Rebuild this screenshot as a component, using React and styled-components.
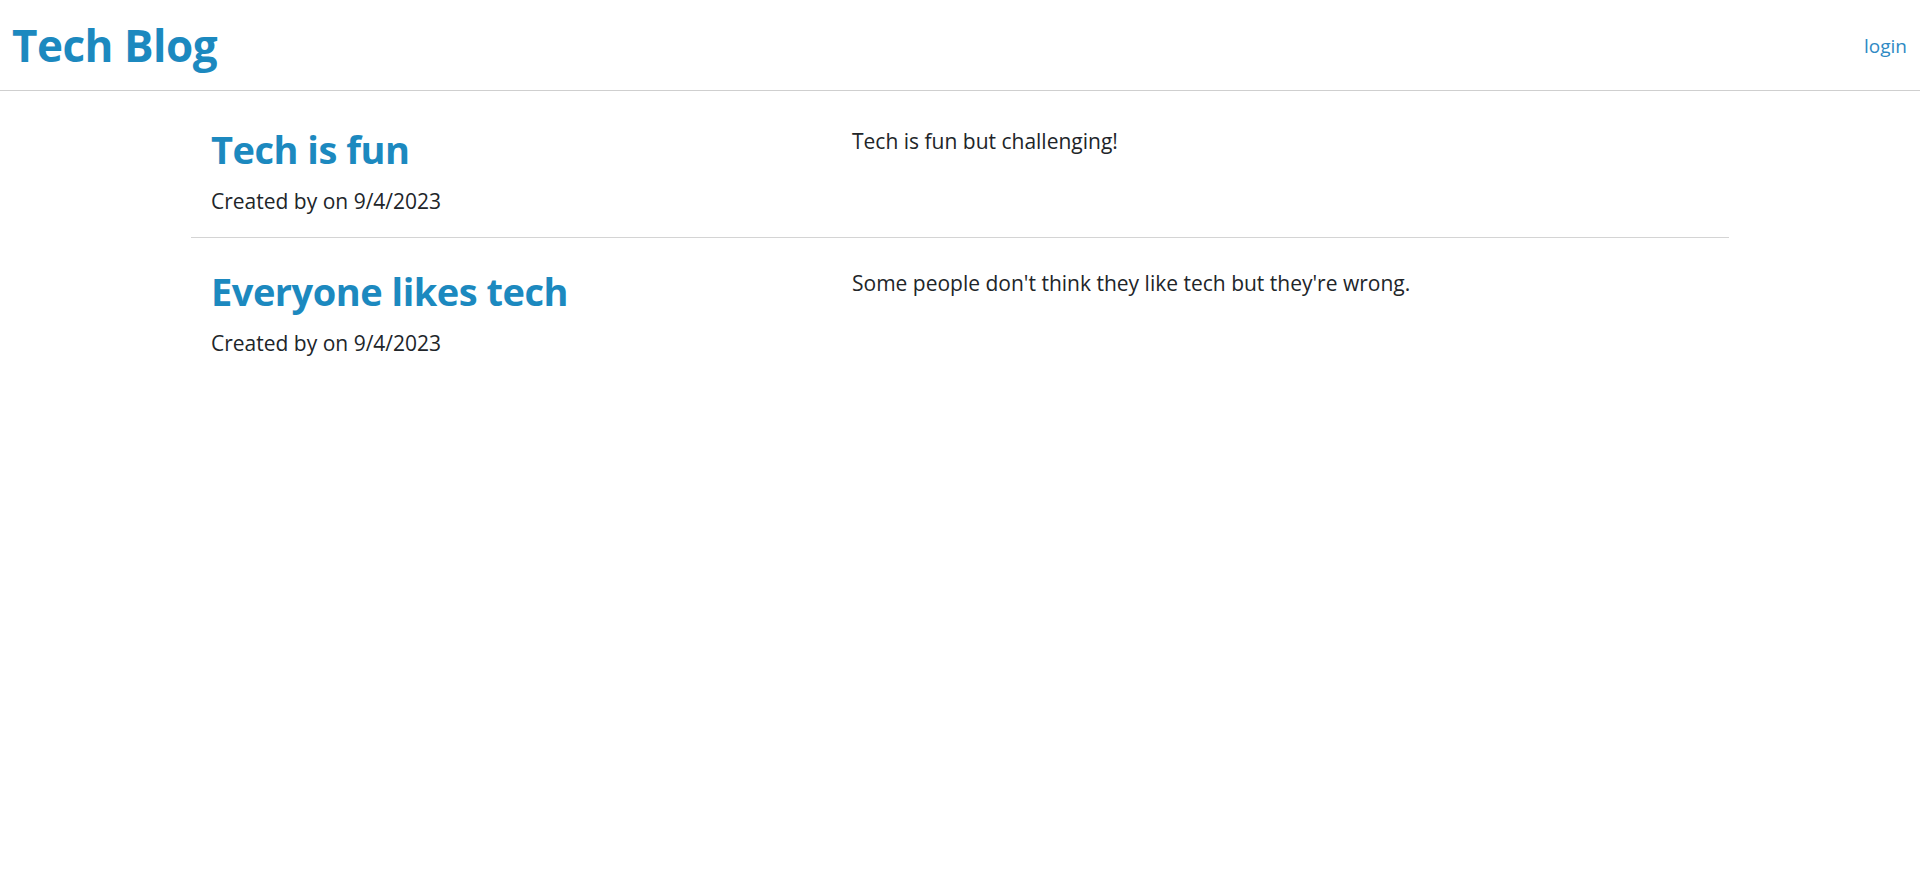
import React from 'react';
import styled, { createGlobalStyle } from 'styled-components';

const GlobalStyle = createGlobalStyle`
  body {
    margin: 0;
    background: #fff;
    font-family: 'Open Sans', 'Noto Sans', Arial, sans-serif;
    color: #212529;
  }
`;

const Header = styled.header`
  display: flex;
  align-items: center;
  justify-content: space-between;
  height: 90px;
  padding: 0 13px 0 12px;
  border-bottom: 1px solid #cfcfcf;
`;

const Brand = styled.h1`
  margin: 0;
  font-size: 44px;
  font-weight: 700;
  color: #1c89bf;
  letter-spacing: -0.5px;
`;

const NavLink = styled.a`
  font-size: 19px;
  color: #2f8ac4;
  text-decoration: none;
  cursor: pointer;
  margin-top: 2px;
`;

const Main = styled.main`
  max-width: 1538px;
  margin: 0 auto;
  padding-top: 5px;
`;

const Post = styled.article`
  display: grid;
  grid-template-columns: 661px 1fr;
  padding: 27px 20px 22px;
  & + & {
    border-top: 1px solid #d4d4d4;
  }
`;

const Title = styled.h2`
  margin: 0 0 12px;
  font-size: 38px;
  font-weight: 700;
  color: #1c89bf;
  letter-spacing: -0.5px;
`;

const Meta = styled.p`
  margin: 0;
  font-size: 21px;
`;

const Body = styled.p`
  margin: 4px 0 0 -20px;
  font-size: 21px;
`;

const posts = [
  { title: 'Tech is fun', date: '9/4/2023', body: 'Tech is fun but challenging!' },
  {
    title: 'Everyone likes tech',
    date: '9/4/2023',
    body: "Some people don't think they like tech but they're wrong.",
  },
];

export default function App() {
  return (
    <>
      <GlobalStyle />
      <Header>
        <Brand>Tech Blog</Brand>
        <NavLink>login</NavLink>
      </Header>
      <Main>
        {posts.map((p) => (
          <Post key={p.title}>
            <div>
              <Title>{p.title}</Title>
              <Meta>Created by on {p.date}</Meta>
            </div>
            <Body>{p.body}</Body>
          </Post>
        ))}
      </Main>
    </>
  );
}
